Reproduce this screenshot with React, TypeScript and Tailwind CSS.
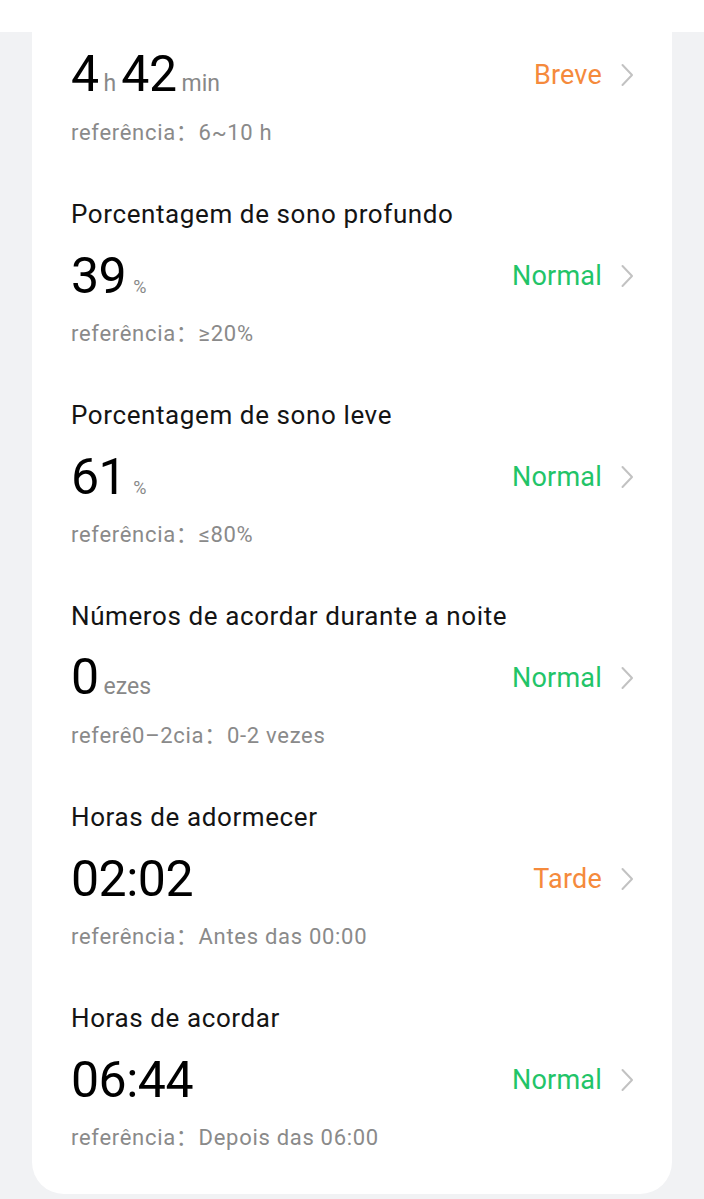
type Row = {
  title?: string;
  value: { n: string; unit?: string; small?: boolean }[];
  ref: string;
  status: string;
  tone: "ok" | "warn";
};

const rows: Row[] = [
  {
    value: [
      { n: "4", unit: "h" },
      { n: "42", unit: "min" },
    ],
    ref: "referência：6~10 h",
    status: "Breve",
    tone: "warn",
  },
  {
    title: "Porcentagem de sono profundo",
    value: [{ n: "39", unit: "%", small: true }],
    ref: "referência：≥20%",
    status: "Normal",
    tone: "ok",
  },
  {
    title: "Porcentagem de sono leve",
    value: [{ n: "61", unit: "%", small: true }],
    ref: "referência：≤80%",
    status: "Normal",
    tone: "ok",
  },
  {
    title: "Números de acordar durante a noite",
    value: [{ n: "0", unit: "ezes" }],
    ref: "referê0–2cia：0-2 vezes",
    status: "Normal",
    tone: "ok",
  },
  {
    title: "Horas de adormecer",
    value: [{ n: "02:02" }],
    ref: "referência：Antes das 00:00",
    status: "Tarde",
    tone: "warn",
  },
  {
    title: "Horas de acordar",
    value: [{ n: "06:44" }],
    ref: "referência：Depois das 06:00",
    status: "Normal",
    tone: "ok",
  },
];

function Chevron() {
  return (
    <svg width="14" height="24" viewBox="0 0 14 24" className="ml-[18px] text-[#c2c2c2]">
      <polyline
        points="2.5,2 12,12 2.5,22"
        fill="none"
        stroke="currentColor"
        strokeWidth="2"
        strokeLinecap="round"
        strokeLinejoin="round"
      />
    </svg>
  );
}

function Section({ row, first }: { row: Row; first: boolean }) {
  return (
    <div className={first ? "" : "mt-[52px]"}>
      {row.title && (
        <div className="h-[32px] flex items-center text-[26px] tracking-[0.6px] text-[#141414]">
          {row.title}
        </div>
      )}
      <div className={`h-[56px] flex items-center justify-between ${row.title ? "mt-[18px]" : ""}`}>
        <div className="flex items-baseline">
          {row.value.map((v, i) => (
            <div key={i} className="flex items-baseline">
              <span className="text-[50px] leading-none text-black tracking-[-0.5px]">{v.n}</span>
              {v.unit && (
                <span
                  className={`ml-[5px] mr-[5px] text-[#888888] ${
                    v.small ? "text-[18px] ml-[7px]" : "text-[23px]"
                  }`}
                >
                  {v.unit}
                </span>
              )}
            </div>
          ))}
        </div>
        <div className="flex items-center">
          <span
            className={`text-[27px] tracking-[0.2px] ${
              row.tone === "ok" ? "text-[#22c468]" : "text-[#f58a3c]"
            }`}
          >
            {row.status}
          </span>
          <Chevron />
        </div>
      </div>
      <div className="mt-[15px] h-[28px] flex items-center text-[22px] tracking-[0.7px] text-[#8a8a8a]">
        {row.ref}
      </div>
    </div>
  );
}

export default function App() {
  return (
    <div
      className="min-h-[1199px] bg-[#f1f2f4]"
      style={{ fontFamily: "Roboto, 'Noto Sans CJK SC', sans-serif" }}
    >
      <div className="h-8 bg-white" />
      <div className="mx-8 bg-white rounded-b-[32px] pt-[15px] pb-[43px] pl-[39px] pr-[38px]">
        {rows.map((r, i) => (
          <Section key={i} row={r} first={i === 0} />
        ))}
      </div>
    </div>
  );
}
